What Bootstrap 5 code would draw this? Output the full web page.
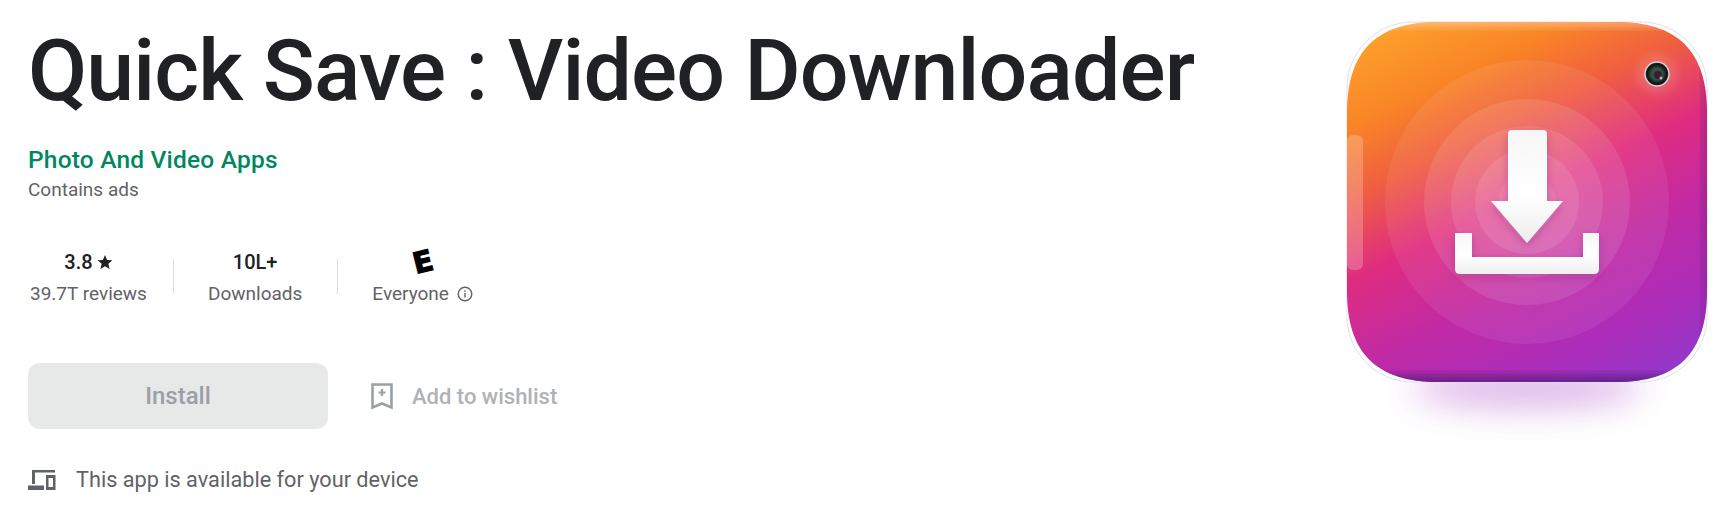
<!DOCTYPE html>
<html lang="en">
<head>
    <meta charset="UTF-8">
    <meta name="viewport" content="width=device-width, initial-scale=1.0">
    <title>Quick Save : Video Downloader</title>
    <link href="https://cdn.jsdelivr.net/npm/bootstrap@5.3.2/dist/css/bootstrap.min.css" rel="stylesheet">
    <style>
        body { font-family: Roboto, "Liberation Sans", sans-serif; color: #202124; background: #fff; overflow: hidden; }
        .app-header { height: 509px; padding-left: 28px; }
        .app-title { font-family: Roboto, sans-serif; font-size: 86px; line-height: 100px; font-weight: 500; margin: 21px 0 0; letter-spacing: -.9px; color: #202124; white-space: nowrap; }
        .dev-name { font-size: 24.5px; line-height: 32px; font-weight: 500; letter-spacing: .2px; color: #01875f; margin-top: 23px; }
        .ads-note { font-size: 19px; line-height: 24px; color: #5f6368; margin-top: 2px; }
        .stats-row { margin-top: 47px; }
        .stat-item { padding: 0 35px; position: relative; text-align: center; }
        .stat-item:first-child { padding: 0 26px 0 2px; }
        .stat-item + .stat-item::before { content: ""; position: absolute; left: 0; top: 10px; height: 35px; width: 1px; background: #dadce0; }
        .stat-top { font-size: 20px; line-height: 26px; font-weight: 500; height: 26px; }
        .stat-label { font-size: 19px; line-height: 24px; color: #5f6368; margin-top: 7px; white-space: nowrap; }
        .rating-e { display: inline-block; font-family: "DejaVu Sans", sans-serif; font-weight: 700; font-size: 29px; line-height: 26px; color: #000; -webkit-text-stroke: 1.2px #000; transform: rotate(-14deg); }
        .btn-install { width: 300px; height: 66px; border-radius: 12px; background: #e7e8e8; border: 0; color: #9aa0a6; font-size: 24px; font-weight: 500; }
        .btn-install:disabled { background: #e7e8e8; color: #9aa0a6; opacity: 1; }
        .actions-row { margin-top: 57px; }
        .wish-block { margin-left: 43px; gap: 19px; }
        .wish-text { font-size: 22px; color: #b0b2b5; font-weight: 500; }
        .device-row { margin-top: 37px; font-size: 21.7px; line-height: 28px; color: #5f6368; gap: 20px; }
        .icon-wrap { width: 406px; flex: none; }
        .app-icon { display: block; }
    </style>
</head>
<body>
    <div class="app-header d-flex justify-content-between">
        <div>
            <h1 class="app-title">Quick Save : Video Downloader</h1>
            <div class="dev-name">Photo And Video Apps</div>
            <div class="ads-note">Contains ads</div>

            <div class="stats-row d-flex">
                <div class="stat-item">
                    <div class="stat-top d-flex justify-content-center align-items-center">3.8<svg class="star-icon ms-1" width="16" height="16" viewBox="0 0 24 24" fill="#202124"><path d="M12 1.500l3.100 7.400 8 .6-6.100 5.200 1.900 7.800L12 18.300l-6.900 4.200L7 14.700.9 9.500l8-.6z"/></svg></div>
                    <div class="stat-label">39.7T reviews</div>
                </div>
                <div class="stat-item">
                    <div class="stat-top">10L+</div>
                    <div class="stat-label">Downloads</div>
                </div>
                <div class="stat-item">
                    <div class="stat-top"><span class="rating-e">E</span></div>
                    <div class="stat-label d-flex align-items-center gap-2">Everyone
                        <svg width="16" height="16" viewBox="0 0 16 16" fill="none" stroke="#5f6368" stroke-width="1.400"><circle cx="8" cy="8" r="6.800"/><path d="M8 7v4.600"/><path d="M8 4.200v1.600"/></svg>
                    </div>
                </div>
            </div>

            <div class="actions-row d-flex align-items-center">
                <button class="btn btn-install" disabled>Install</button>
                <div class="wish-block d-flex align-items-center">
                    <svg width="22" height="27" viewBox="0 0 22 27" fill="none" stroke="#9aa0a6" stroke-width="2.600"><path d="M1.500 1.500h19v23L11 20.500l-9.500 4z"/><path d="M11 6v7M7.500 9.500h7" stroke-width="2.200"/></svg>
                    <span class="wish-text">Add to wishlist</span>
                </div>
            </div>

            <div class="device-row d-flex align-items-center">
                <svg width="28" height="20" viewBox="0 0 28 20" fill="#5f6368"><path d="M4 0h23v2.500H7V14H4z"/><path d="M0 15.500h16V20H0z"/><path fill-rule="evenodd" d="M18 5h9.500v15H18zM20.500 8v9h4.500V8z"/></svg>
                <span>This app is available for your device</span>
            </div>
        </div>

        <div class="icon-wrap">
            <svg class="app-icon" width="406" height="440" viewBox="0 0 406 440">
                <defs>
                    <linearGradient id="bgGrad" gradientUnits="userSpaceOnUse" x1="27" y1="22" x2="235" y2="454">
                        <stop offset="0" stop-color="#ffa82e"/>
                        <stop offset="0.2" stop-color="#f98526"/>
                        <stop offset="0.33" stop-color="#f0603f"/>
                        <stop offset="0.49" stop-color="#df2c80"/>
                        <stop offset="0.66" stop-color="#c02aa5"/>
                        <stop offset="0.83" stop-color="#ab2dbb"/>
                        <stop offset="1" stop-color="#8b3bcf"/>
                    </linearGradient>
                    <filter id="blurWide" x="-30%" y="-150%" width="160%" height="400%"><feGaussianBlur stdDeviation="17"/></filter>
                    <filter id="blurSoft" x="-20%" y="-50%" width="140%" height="200%"><feGaussianBlur stdDeviation="5"/></filter>
                    <filter id="arrowShadow" x="-30%" y="-30%" width="160%" height="160%"><feDropShadow dx="0" dy="3" stdDeviation="5" flood-color="#7a1a70" flood-opacity=".3"/></filter>
                    <clipPath id="shapeClip"><path d="M118 22H296C358 22 387 51 387 113V291C387 353 358 382 296 382H118C56 382 27 353 27 291V113C27 51 56 22 118 22Z"/></clipPath>
                    <radialGradient id="lensGrad" cx="0.5" cy="0.5" r="0.5">
                        <stop offset="0" stop-color="#5a2a4a"/>
                        <stop offset="0.45" stop-color="#2a5a4a"/>
                        <stop offset="0.8" stop-color="#141414"/>
                        <stop offset="1" stop-color="#2a2a2a"/>
                    </radialGradient>
                    <linearGradient id="arrowFill" x1="0" y1="0" x2="0" y2="1">
                        <stop offset="0" stop-color="#f6f6f6"/>
                        <stop offset="0.55" stop-color="#fff"/>
                        <stop offset="1" stop-color="#eeeeee"/>
                    </linearGradient>
                </defs>
                <ellipse cx="207" cy="388" rx="115" ry="20" fill="#a83fc4" opacity=".38" filter="url(#blurWide)"/>
                <rect x="27" y="22" width="360" height="360" rx="66" fill="#fff" stroke="#e6dcea" stroke-width="1"/>
                <g clip-path="url(#shapeClip)">
                    <rect x="27" y="22" width="360" height="360" fill="url(#bgGrad)"/>
                    <rect x="20" y="376" width="374" height="12" fill="#4a1a70" opacity=".75" filter="url(#blurSoft)"/>
                    <rect x="382" y="60" width="12" height="300" fill="#6a1f78" opacity=".35" filter="url(#blurSoft)"/>
                    <rect x="20" y="16" width="374" height="10" fill="#ffe3c4" opacity=".55" filter="url(#blurSoft)"/>
                    <rect x="27" y="135" width="16" height="135" rx="6" fill="#fff" opacity=".22"/>
                </g>
                <g fill="#fff">
                    <circle cx="207" cy="202" r="142" opacity=".07"/>
                    <circle cx="207" cy="202" r="103" opacity=".1"/>
                    <circle cx="207" cy="202" r="76" opacity=".1"/>
                    <circle cx="207" cy="202" r="52" opacity=".1"/>
                    <circle cx="207" cy="202" r="29" opacity=".08"/>
                </g>
                <g filter="url(#arrowShadow)" fill="url(#arrowFill)">
                    <path d="M188 134q0-4 4-4h31q4 0 4 4v67h16l-36 42-36-42h17z"/>
                    <path d="M135 233h17v24h111v-24h16v36q0 5-5 5H140q-5 0-5-5z"/>
                </g>
                <circle cx="337" cy="74" r="20" fill="#fff" opacity=".12" filter="url(#blurSoft)"/>
                <circle cx="337" cy="74" r="12" fill="url(#lensGrad)" stroke="#d4d4da" stroke-width="1.500"/>
                <circle cx="338" cy="75" r="4" fill="#3a1d33"/>
                <circle cx="341" cy="78" r="1.500" fill="#c8b0c0"/>
            </svg>
        </div>
    </div>
    <script src="https://cdn.jsdelivr.net/npm/bootstrap@5.3.2/dist/js/bootstrap.bundle.min.js"></script>
</body>
</html>
